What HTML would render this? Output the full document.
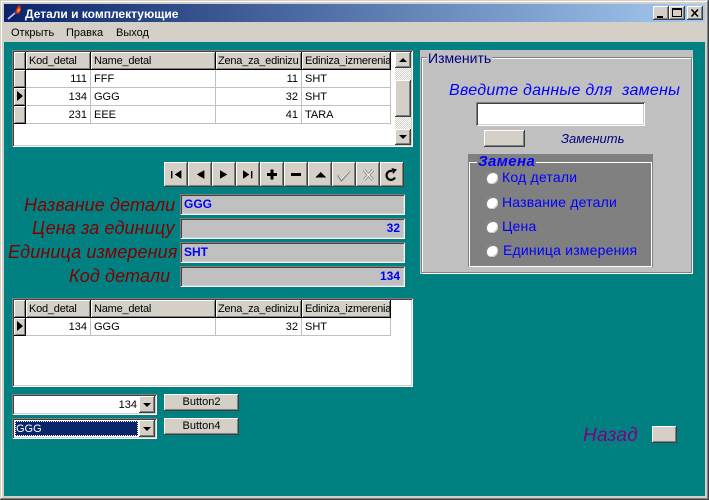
<!DOCTYPE html>
<html><head><meta charset="utf-8"><style>
html,body{margin:0;padding:0;background:#d4d0c8}
body{width:709px;height:500px;position:relative;overflow:hidden;font:11px "Liberation Sans",sans-serif;color:#000}
div,span,b{position:absolute;box-sizing:border-box;white-space:pre}
.r{background:#d4d0c8;box-shadow:inset -1px -1px 0 #404040,inset 1px 1px 0 #fff,inset -2px -2px 0 #808080}
.s{box-shadow:inset 1px 1px 0 #808080,inset -1px -1px 0 #fff,inset 2px 2px 0 #404040,inset -2px -2px 0 #d4d0c8}
.h{background:#d4d0c8;box-shadow:inset -1px -1px 0 #000,inset 1px 1px 0 #fff,inset -2px -2px 0 #808080;line-height:18px;padding-left:3px;height:18px;overflow:hidden;letter-spacing:-.22px}
.c{background:#fff;height:18px;line-height:19px;border-right:1px solid #c0c0c0;border-bottom:1px solid #c0c0c0;padding:0 3px;overflow:hidden}
.n{text-align:right}
.lab{font-style:italic;color:#800000;font-size:18px;line-height:20px;letter-spacing:.12px}
.e{background:#c0c0c0;height:21px;left:180px;width:225px;font-weight:bold;color:#00f;font-size:12px;line-height:21px;padding:0 5px 0 4px}
.rad{width:12px;height:12px;border-radius:50%;background:#fff;box-shadow:inset 1px 1px 0 #808080,inset -1px -1px 0 #d4d0c8;left:486px}
.rl{color:#00f;font-size:14px;line-height:16px;letter-spacing:.2px}
.tri{width:0;height:0;border-style:solid;border-color:transparent}
.bt{line-height:17px;text-align:center;font-size:11px}
</style></head><body>
<div style="left:0;top:499px;width:709px;height:1px;background:#404040"></div>
<div style="left:708px;top:0;width:1px;height:500px;background:#404040"></div>
<div style="left:1px;top:498px;width:707px;height:1px;background:#808080"></div>
<div style="left:707px;top:1px;width:1px;height:498px;background:#808080"></div>
<div style="left:1px;top:1px;width:706px;height:1px;background:#fff"></div>
<div style="left:1px;top:1px;width:1px;height:497px;background:#fff"></div>
<div style="left:4px;top:4px;width:701px;height:18px;background:linear-gradient(90deg,#0a246a,#a6caf0)"></div>
<svg style="position:absolute;left:5px;top:4px" width="18" height="18" viewBox="0 0 18 18"><path d="M3 15L11 8" stroke="#10208a" stroke-width="4"/><path d="M3 15L10 9" stroke="#c8c8d8" stroke-width="1.6"/><path d="M10 8L13 2L15 1L16 5L15 9L12 10Z" fill="#e03010"/><path d="M12 7L14 4L15 6L13 8Z" fill="#ffc020"/></svg>
<b style="left:25px;top:6px;color:#fff;font-size:12px;line-height:16px">Детали и комплектующие</b>
<div class="r" style="left:653px;top:6px;width:16px;height:14px"></div><div style="left:657px;top:16px;width:6px;height:2px;background:#000"></div>
<div class="r" style="left:669px;top:6px;width:16px;height:14px"></div><div style="left:672px;top:8px;width:10px;height:9px;border:1px solid #000;border-top-width:2px"></div>
<div class="r" style="left:687px;top:6px;width:16px;height:14px"></div>
<svg style="position:absolute;left:687px;top:6px" width="16" height="14"><path d="M4.500 3.500L11 10.500M11 3.500L4.500 10.500" stroke="#000" stroke-width="1.600"/></svg>
<div style="left:11px;top:25px;line-height:16px">Открыть</div><div style="left:66px;top:25px;line-height:16px">Правка</div><div style="left:116px;top:25px;line-height:16px">Выход</div>
<div style="left:4px;top:42px;width:701px;height:454px;background:#008080"></div>

<!-- grid 1 -->
<div class="s" style="left:12px;top:50px;width:401px;height:97px;background:#fff"></div>
<div class="h" style="left:14px;top:52px;width:12px"></div>
<div class="h" style="left:26px;top:52px;width:65px">Kod_detal</div>
<div class="h" style="left:91px;top:52px;width:125px">Name_detal</div>
<div class="h" style="left:216px;top:52px;width:86px;padding-left:2px">Zena_za_edinizu</div>
<div class="h" style="left:302px;top:52px;width:89px;padding-left:3px">Ediniza_izmerenia</div>
<div class="h" style="left:14px;top:70px;width:12px"></div><div class="h" style="left:14px;top:88px;width:12px"></div><div class="h" style="left:14px;top:106px;width:12px"></div>
<div class="tri" style="left:17px;top:91px;border-width:5px 0 5px 6px;border-left-color:#000"></div>
<div class="c n" style="left:26px;top:70px;width:65px">111</div><div class="c" style="left:91px;top:70px;width:125px">FFF</div><div class="c n" style="left:216px;top:70px;width:86px">11</div><div class="c" style="left:302px;top:70px;width:89px">SHT</div>
<div class="c n" style="left:26px;top:88px;width:65px">134</div><div class="c" style="left:91px;top:88px;width:125px">GGG</div><div class="c n" style="left:216px;top:88px;width:86px">32</div><div class="c" style="left:302px;top:88px;width:89px">SHT</div>
<div class="c n" style="left:26px;top:106px;width:65px">231</div><div class="c" style="left:91px;top:106px;width:125px">EEE</div><div class="c n" style="left:216px;top:106px;width:86px">41</div><div class="c" style="left:302px;top:106px;width:89px">TARA</div>
<div style="left:395px;top:52px;width:16px;height:93px;background:repeating-conic-gradient(#fff 0 25%,#d4d0c8 0 50%) 0 0/2px 2px"></div>
<div class="r" style="left:395px;top:52px;width:16px;height:16px"></div><div class="tri" style="left:399px;top:58px;border-width:0 4px 4px;border-bottom-color:#000"></div>
<div class="r" style="left:395px;top:80px;width:16px;height:37px"></div>
<div class="r" style="left:395px;top:129px;width:16px;height:16px"></div><div class="tri" style="left:399px;top:135px;border-width:4px 4px 0;border-top-color:#000"></div>

<!-- navigator -->
<div class="r" style="left:164px;top:162px;width:24px;height:25px"></div><div class="r" style="left:188px;top:162px;width:24px;height:25px"></div><div class="r" style="left:212px;top:162px;width:24px;height:25px"></div><div class="r" style="left:236px;top:162px;width:24px;height:25px"></div><div class="r" style="left:260px;top:162px;width:24px;height:25px"></div><div class="r" style="left:284px;top:162px;width:24px;height:25px"></div><div class="r" style="left:308px;top:162px;width:24px;height:25px"></div><div class="r" style="left:332px;top:162px;width:24px;height:25px"></div><div class="r" style="left:356px;top:162px;width:24px;height:25px"></div><div class="r" style="left:380px;top:162px;width:24px;height:25px"></div>
<svg style="position:absolute;left:164px;top:162px" width="240" height="25" shape-rendering="crispEdges">
<path d="M7 9h1v7h-1zM17 8.500v8l-6-4zM40 8.500v8l-7-4zM56 8.500v8l7-4zM79 8.500v8l6-4zM87 9h1v7h-1z" fill="#000" stroke="#000" stroke-width=".4"/>
<rect x="103" y="11" width="10" height="3" fill="#000"/><rect x="106.500" y="7.500" width="3" height="10" fill="#000"/>
<rect x="127" y="11" width="10" height="3" fill="#000"/>
<path d="M151 15.500h11l-5.500-5.500z" fill="#000"/>
</svg>
<svg style="position:absolute;left:164px;top:162px" width="240" height="25">
<path d="M174 13l3.500 5 8-9" fill="none" stroke="#808080" stroke-width="2.400"/><path d="M174.500 13l3 4 7.500-8" fill="none" stroke="#f4f4f4" stroke-width="1"/>
<path d="M200 8l9 10M209 8l-9 10" stroke="#909090" stroke-width="3"/><path d="M200 8l9 10M209 8l-9 10" stroke="#f0f0f0" stroke-width="1.200"/>
<path d="M231 15.500A4.500 4.500 0 1 1 228 9" fill="none" stroke="#000" stroke-width="2.200"/><path d="M227.500 6L233 7.500L229 12Z" fill="#000"/>
</svg>

<!-- labels + edits -->
<div class="lab" style="left:24px;top:195px">Название детали</div>
<div class="lab" style="left:32px;top:218px">Цена за единицу</div>
<div class="lab" style="left:8px;top:242px">Единица измерения</div>
<div class="lab" style="left:69px;top:266px">Код детали</div>
<div class="e s" style="top:194px">GGG</div>
<div class="e s" style="top:218px;text-align:right">32</div>
<div class="e s" style="top:242px">SHT</div>
<div class="e s" style="top:266px;text-align:right">134</div>

<!-- grid 2 -->
<div class="s" style="left:12px;top:298px;width:401px;height:89px;background:#fff"></div>
<div class="h" style="left:14px;top:300px;width:12px"></div>
<div class="h" style="left:26px;top:300px;width:65px">Kod_detal</div>
<div class="h" style="left:91px;top:300px;width:125px">Name_detal</div>
<div class="h" style="left:216px;top:300px;width:86px;padding-left:2px">Zena_za_edinizu</div>
<div class="h" style="left:302px;top:300px;width:89px;padding-left:3px">Ediniza_izmerenia</div>
<div class="h" style="left:14px;top:318px;width:12px"></div>
<div class="tri" style="left:17px;top:321px;border-width:5px 0 5px 6px;border-left-color:#000"></div>
<div class="c n" style="left:26px;top:318px;width:65px">134</div><div class="c" style="left:91px;top:318px;width:125px">GGG</div><div class="c n" style="left:216px;top:318px;width:86px">32</div><div class="c" style="left:302px;top:318px;width:89px">SHT</div>

<!-- combos -->
<div class="s" style="left:12px;top:394px;width:145px;height:21px;background:#fff"></div>
<div style="left:14px;top:397px;width:123px;height:17px;line-height:17px;text-align:right">134</div>
<div class="r" style="left:139px;top:396px;width:16px;height:17px"></div><div class="tri" style="left:143px;top:403px;border-width:4px 4px 0;border-top-color:#000"></div>
<div class="s" style="left:12px;top:418px;width:145px;height:21px;background:#fff"></div>
<div style="left:15px;top:421px;width:123px;height:15px;background:#0a246a;color:#fff;line-height:16px;padding-left:1px;outline:1px dotted #fff;outline-offset:-1px">GGG</div>
<div class="r" style="left:139px;top:420px;width:16px;height:17px"></div><div class="tri" style="left:143px;top:427px;border-width:4px 4px 0;border-top-color:#000"></div>
<div class="r bt" style="left:164px;top:394px;width:75px;height:17px">Button2</div>
<div class="r bt" style="left:164px;top:418px;width:75px;height:17px">Button4</div>

<!-- right panel -->
<div style="left:420px;top:50px;width:273px;height:224px;background:#c0c0c0"></div>
<div style="left:421px;top:57px;width:271px;height:216px;border:1px solid #808080;box-shadow:1px 1px 0 #fff,inset 1px 1px 0 #fff"></div>
<div style="left:427px;top:51px;height:14px;background:#c0c0c0;color:#000080;font-size:14px;line-height:14px;padding:0 1px">Изменить</div>
<div style="left:449px;top:82px;color:#00f;font-style:italic;font-size:16px;line-height:18px;letter-spacing:.27px">Введите данные для  замены</div>
<div class="s" style="left:476px;top:102px;width:169px;height:24px;background:#fff"></div>
<div class="r" style="left:484px;top:130px;width:41px;height:17px"></div>
<div style="left:561px;top:131px;color:#000080;font-style:italic;font-size:13px;line-height:16px">Заменить</div>
<div style="left:468px;top:154px;width:185px;height:113px;background:#808080"></div>
<div style="left:469px;top:162px;width:183px;height:105px;border:1px solid #fff"></div>
<b style="left:477px;top:155px;background:#808080;color:#00f;font-style:italic;font-size:15px;line-height:14px;padding:0 1px;letter-spacing:.4px">Замена</b>
<div class="rad" style="top:172px"></div><div class="rl" style="left:502px;top:169px">Код детали</div>
<div class="rad" style="top:197px"></div><div class="rl" style="left:502px;top:194px">Название детали</div>
<div class="rad" style="top:221px"></div><div class="rl" style="left:502px;top:218px">Цена</div>
<div class="rad" style="top:245px"></div><div class="rl" style="left:503px;top:242px">Единица измерения</div>

<!-- back -->
<div style="left:583px;top:427px;color:#800080;font-style:italic;font-size:19px;line-height:18px;letter-spacing:.3px">Назад</div>
<div class="r" style="left:652px;top:426px;width:25px;height:17px"></div>
</body></html>
